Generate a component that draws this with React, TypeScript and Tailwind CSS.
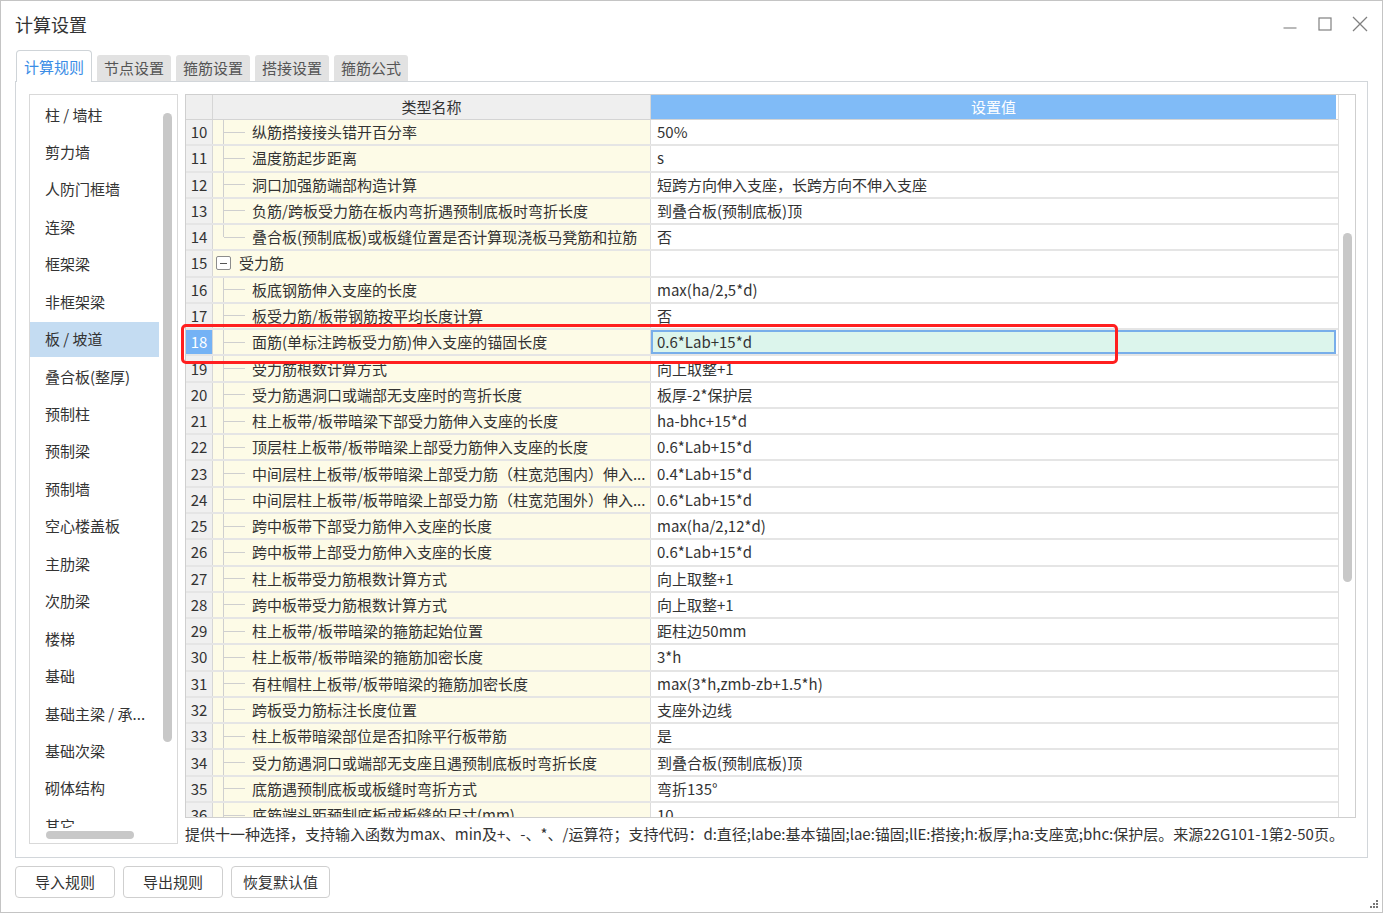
import React from "react";

type Tree = "line" | "end" | "group";
type Row = { n: number; name: string; value: string; tree: Tree };

const rows: Row[] = [
  { n: 10, name: "纵筋搭接接头错开百分率", value: "50%", tree: "line" },
  { n: 11, name: "温度筋起步距离", value: "s", tree: "line" },
  { n: 12, name: "洞口加强筋端部构造计算", value: "短跨方向伸入支座，长跨方向不伸入支座", tree: "line" },
  { n: 13, name: "负筋/跨板受力筋在板内弯折遇预制底板时弯折长度", value: "到叠合板(预制底板)顶", tree: "line" },
  { n: 14, name: "叠合板(预制底板)或板缝位置是否计算现浇板马凳筋和拉筋", value: "否", tree: "end" },
  { n: 15, name: "受力筋", value: "", tree: "group" },
  { n: 16, name: "板底钢筋伸入支座的长度", value: "max(ha/2,5*d)", tree: "line" },
  { n: 17, name: "板受力筋/板带钢筋按平均长度计算", value: "否", tree: "line" },
  { n: 18, name: "面筋(单标注跨板受力筋)伸入支座的锚固长度", value: "0.6*Lab+15*d", tree: "line" },
  { n: 19, name: "受力筋根数计算方式", value: "向上取整+1", tree: "line" },
  { n: 20, name: "受力筋遇洞口或端部无支座时的弯折长度", value: "板厚-2*保护层", tree: "line" },
  { n: 21, name: "柱上板带/板带暗梁下部受力筋伸入支座的长度", value: "ha-bhc+15*d", tree: "line" },
  { n: 22, name: "顶层柱上板带/板带暗梁上部受力筋伸入支座的长度", value: "0.6*Lab+15*d", tree: "line" },
  { n: 23, name: "中间层柱上板带/板带暗梁上部受力筋（柱宽范围内）伸入...", value: "0.4*Lab+15*d", tree: "line" },
  { n: 24, name: "中间层柱上板带/板带暗梁上部受力筋（柱宽范围外）伸入...", value: "0.6*Lab+15*d", tree: "line" },
  { n: 25, name: "跨中板带下部受力筋伸入支座的长度", value: "max(ha/2,12*d)", tree: "line" },
  { n: 26, name: "跨中板带上部受力筋伸入支座的长度", value: "0.6*Lab+15*d", tree: "line" },
  { n: 27, name: "柱上板带受力筋根数计算方式", value: "向上取整+1", tree: "line" },
  { n: 28, name: "跨中板带受力筋根数计算方式", value: "向上取整+1", tree: "line" },
  { n: 29, name: "柱上板带/板带暗梁的箍筋起始位置", value: "距柱边50mm", tree: "line" },
  { n: 30, name: "柱上板带/板带暗梁的箍筋加密长度", value: "3*h", tree: "line" },
  { n: 31, name: "有柱帽柱上板带/板带暗梁的箍筋加密长度", value: "max(3*h,zmb-zb+1.5*h)", tree: "line" },
  { n: 32, name: "跨板受力筋标注长度位置", value: "支座外边线", tree: "line" },
  { n: 33, name: "柱上板带暗梁部位是否扣除平行板带筋", value: "是", tree: "line" },
  { n: 34, name: "受力筋遇洞口或端部无支座且遇预制底板时弯折长度", value: "到叠合板(预制底板)顶", tree: "line" },
  { n: 35, name: "底筋遇预制底板或板缝时弯折方式", value: "弯折135°", tree: "line" },
  { n: 36, name: "底筋端头距预制底板或板缝的尺寸(mm)", value: "10", tree: "line" },
];

const listItems = [
  "柱 / 墙柱",
  "剪力墙",
  "人防门框墙",
  "连梁",
  "框架梁",
  "非框架梁",
  "板 / 坡道",
  "叠合板(整厚)",
  "预制柱",
  "预制梁",
  "预制墙",
  "空心楼盖板",
  "主肋梁",
  "次肋梁",
  "楼梯",
  "基础",
  "基础主梁 / 承...",
  "基础次梁",
  "砌体结构",
  "其它",
];

function TableRow({ r }: { r: Row }) {
  const sel = r.n === 18;
  return (
    <div className="flex h-[26.28px] shrink-0 border-b-2 border-[#e5e5e5]">
      <div
        className={
          sel
            ? "flex w-[27px] shrink-0 items-center justify-center border-r border-[#d6d6d6] bg-[#74b2f5] text-white"
            : "flex w-[27px] shrink-0 items-center justify-center border-r border-[#d6d6d6] bg-[#f0f0f0]"
        }
      >
        {r.n}
      </div>
      <div className="flex w-[438px] shrink-0 items-stretch overflow-hidden whitespace-nowrap border-r border-[#dcdcdc] bg-[#fdfbe7]">
        {r.tree === "group" ? (
          <div className="flex items-center">
            <div className="ml-[3px] flex h-[14px] w-[15px] items-center justify-center rounded-[2px] border border-[#8c8c8c] bg-white">
              <div className="h-px w-[7px] bg-[#555]" />
            </div>
            <span className="ml-[8px]">{r.name}</span>
          </div>
        ) : (
          <div className="flex items-stretch">
            <div className="ml-[10px] flex w-px flex-col">
              <div className={r.tree === "end" ? "h-1/2 bg-[#cfcfcf]" : "h-full bg-[#cfcfcf]"} />
            </div>
            <div className="h-px w-[21px] self-center bg-[#cfcfcf]" />
            <span className="ml-[7px] self-center">{r.name}</span>
          </div>
        )}
      </div>
      <div
        className={
          sel
            ? "flex w-[685px] shrink-0 items-center border-2 border-[#78aeea] bg-[#dcf5ec] pl-[4px] whitespace-nowrap"
            : "flex w-[685px] shrink-0 items-center bg-white pl-[6px] whitespace-nowrap"
        }
      >
        {r.value}
      </div>
    </div>
  );
}

export default function App() {
  return (
    <div className="relative box-border h-[913px] w-[1383px] overflow-hidden border border-[#c4c4c4] bg-white font-['Noto_Sans_CJK_SC',sans-serif] text-[15px] leading-[18px] text-[#333]">
      {/* title bar */}
      <div className="flex h-[49px] items-center justify-between pb-[4px] pl-[14px]">
        <div className="text-[18px] text-[#333]">计算设置</div>
        <div className="flex items-center pr-[5px] text-[#808080]">
          <div className="flex h-[35px] w-[35px] items-center justify-center">
            <svg width="14" height="14" viewBox="0 0 14 14">
              <line x1="0.5" y1="11" x2="13.5" y2="11" stroke="#8a8a8a" strokeWidth="1.2" />
            </svg>
          </div>
          <div className="flex h-[35px] w-[35px] items-center justify-center">
            <svg width="14" height="14" viewBox="0 0 14 14">
              <rect x="1" y="1" width="12" height="12" fill="none" stroke="#808080" strokeWidth="1.2" />
            </svg>
          </div>
          <div className="flex h-[35px] w-[35px] items-center justify-center">
            <svg width="16" height="16" viewBox="0 0 16 16">
              <path d="M1 1 L15 15 M15 1 L1 15" stroke="#808080" strokeWidth="1.3" />
            </svg>
          </div>
        </div>
      </div>

      {/* tabs */}
      <div className="relative z-10 flex h-[31px] items-end gap-[5px] pl-[15px]">
        <div className="-mb-px flex h-[32px] w-[76px] items-center justify-center rounded-t-[4px] border border-b-0 border-[#cfd4d8] bg-white text-[#3b8de6]">
          计算规则
        </div>
        {["节点设置", "箍筋设置", "搭接设置", "箍筋公式"].map((t) => (
          <div
            key={t}
            className="flex h-[26px] w-[74px] items-center justify-center rounded-t-[3px] bg-[#e2e2e2] text-[#555]"
          >
            {t}
          </div>
        ))}
      </div>

      {/* panel */}
      <div className="ml-[14px] box-border flex h-[777px] w-[1353px] border border-[#d2d6da] pl-[13px] pt-[12px]">
        {/* left list */}
        <div className="box-border flex h-[750px] w-[149px] shrink-0 flex-col border border-[#d9d9d9]">
          <div className="flex h-[733px] overflow-hidden">
            <div className="w-[129px] shrink-0 pt-[1px]">
              {listItems.map((it, i) => (
                <div key={it} className="h-[37.45px] pt-[1px]">
                  <div
                    className={
                      i === 6
                        ? "flex h-[35px] items-center bg-[#c4dcf2] pl-[15px] whitespace-nowrap"
                        : "flex h-[35px] items-center pl-[15px] whitespace-nowrap"
                    }
                  >
                    {it}
                  </div>
                </div>
              ))}
            </div>
            <div className="ml-[4px] mt-[18px] h-[629px] w-[9px] shrink-0 rounded-full bg-[#c8c8c8]" />
          </div>
          <div className="pl-[16px] pt-[3px]">
            <div className="h-[8px] w-[88px] rounded-full bg-[#c8c8c8]" />
          </div>
        </div>

        {/* right column */}
        <div className="ml-[7px] flex flex-col">
          <div className="box-border flex h-[724px] w-[1171px] border border-[#cfcfcf]">
            <div className="flex w-[1152px] flex-col overflow-hidden">
              {/* header */}
              <div className="flex h-[25px] shrink-0 border-b border-[#d4d4d4]">
                <div className="w-[27px] shrink-0 border-r border-[#d6d6d6] bg-[#efefef]" />
                <div className="flex w-[438px] shrink-0 items-center justify-center border-r border-[#d6d6d6] bg-[#efefef]">
                  类型名称
                </div>
                <div className="flex w-[685px] shrink-0 items-center justify-center bg-[#80bbf7] text-white">
                  设置值
                </div>
              </div>
              {rows.map((r) => (
                <TableRow key={r.n} r={r} />
              ))}
            </div>
            <div className="flex w-[17px] shrink-0 justify-center border-l border-[#dedede] bg-white">
              <div className="mt-[138px] h-[349px] w-[9px] rounded-full bg-[#c8c8c8]" />
            </div>
          </div>
          <div className="flex h-[32px] items-center whitespace-nowrap">
            提供十一种选择，支持输入函数为max、min及+、-、*、/运算符；支持代码：d:直径;labe:基本锚固;lae:锚固;llE:搭接;h:板厚;ha:支座宽;bhc:保护层。来源22G101-1第2-50页。
          </div>
        </div>
      </div>

      {/* buttons */}
      <div className="ml-[14px] mt-[8px] flex gap-[8px]">
        <button className="h-[32px] w-[100px] rounded-[4px] border border-[#cfcfcf] bg-white text-[#333]">导入规则</button>
        <button className="h-[32px] w-[100px] rounded-[4px] border border-[#cfcfcf] bg-white text-[#333]">导出规则</button>
        <button className="h-[32px] w-[99px] rounded-[4px] border border-[#cfcfcf] bg-white text-[#333]">恢复默认值</button>
      </div>

      {/* red highlight */}
      <div className="pointer-events-none absolute left-[180px] top-[323px] h-[40px] w-[937px] rounded-[5px] border-[3px] border-[#ff1f1f]" />

      {/* resize grip */}
      <svg className="absolute bottom-[3px] right-[3px]" width="12" height="12" viewBox="0 0 12 12">
        <rect x="9" y="3" width="2" height="2" fill="#777" />
        <rect x="6" y="6" width="2" height="2" fill="#777" />
        <rect x="9" y="6" width="2" height="2" fill="#777" />
        <rect x="3" y="9" width="2" height="2" fill="#777" />
        <rect x="6" y="9" width="2" height="2" fill="#777" />
        <rect x="9" y="9" width="2" height="2" fill="#777" />
      </svg>
    </div>
  );
}
